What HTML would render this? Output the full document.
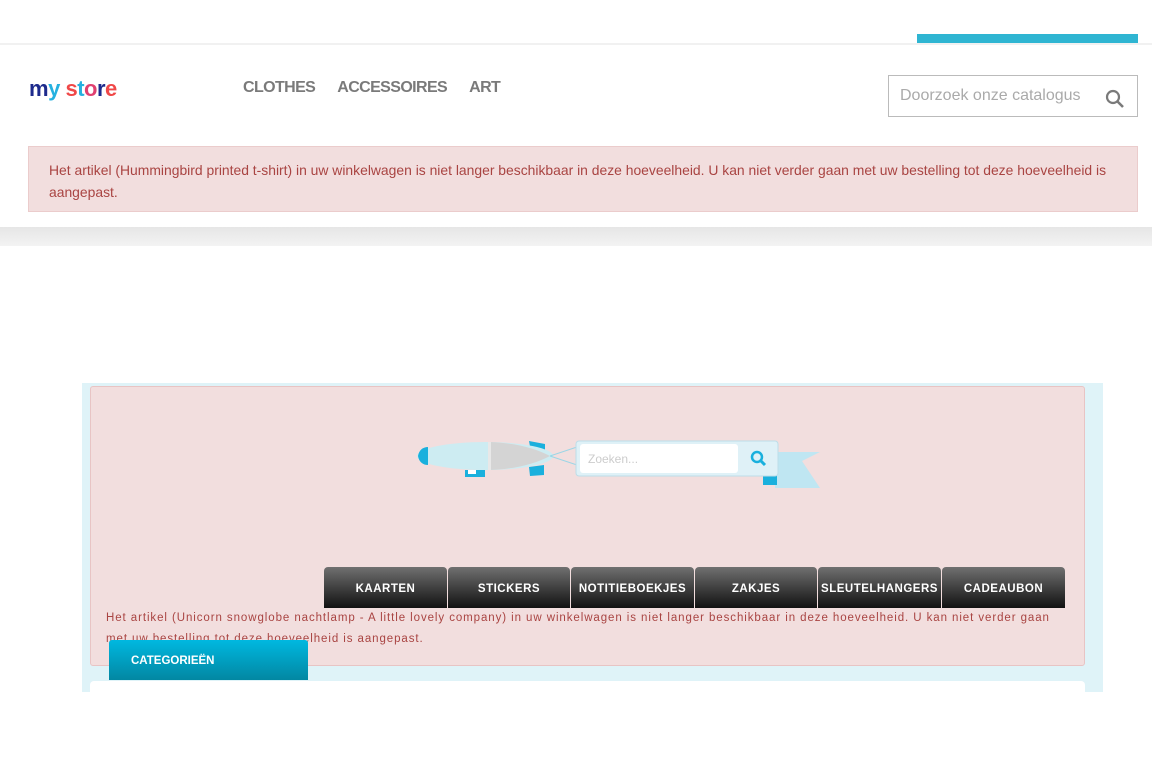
<!DOCTYPE html>
<html><head><meta charset="utf-8"><style>
*{box-sizing:border-box;margin:0;padding:0}
body{width:1152px;height:776px;background:#fff;font-family:"Liberation Sans",sans-serif;position:relative;overflow:hidden}
.abs{position:absolute}
.tab{height:41px;background:linear-gradient(#707070,#111);border-radius:4px 4px 0 0;color:#fff;font-size:11.5px;font-weight:bold;letter-spacing:.5px;display:flex;align-items:center;justify-content:center;padding-top:3px}
</style></head><body>
<div class="abs" style="left:0;top:43px;width:1152px;height:2px;background:#f1f1f1"></div>
<div class="abs" style="left:917px;top:34px;width:221px;height:9px;background:#2fb5d2"></div>
<div class="abs" style="left:29px;top:76px;font-size:22px;font-weight:bold;letter-spacing:-0.5px;line-height:26px">
<span style="color:#1d2a8c">m</span><span style="color:#25b1e0">y</span> <span style="color:#f04848">s</span><span style="color:#25b1e0">t</span><span style="color:#e04070">o</span><span style="color:#1d2a8c">r</span><span style="color:#f04848">e</span></div>
<div class="abs" style="left:243px;top:79px;font-size:16px;font-weight:bold;color:#7a7a7a;letter-spacing:-0.6px">
<span>CLOTHES</span><span style="margin-left:22px">ACCESSOIRES</span><span style="margin-left:22px">ART</span></div>
<div class="abs" style="left:888px;top:75px;width:250px;height:42px;border:1px solid #bbb;background:#fff">
<span class="abs" style="left:11px;top:11px;font-size:16px;color:#aaa">Doorzoek onze catalogus</span>
<svg class="abs" style="left:216px;top:13px" width="20" height="20" viewBox="0 0 20 20"><circle cx="8" cy="8" r="6" fill="none" stroke="#7a7a7a" stroke-width="2.2"/><line x1="12.5" y1="12.5" x2="18" y2="18" stroke="#7a7a7a" stroke-width="2.6"/></svg></div>
<div class="abs" style="left:28px;top:146px;width:1110px;height:66px;background:#f2dede;border:1px solid #ebcccc;padding:12px 20px;font-size:13.9px;line-height:22px;color:#a94442">Het artikel (Hummingbird printed t-shirt) in uw winkelwagen is niet langer beschikbaar in deze hoeveelheid. U kan niet verder gaan met uw bestelling tot deze hoeveelheid is aangepast.</div>
<div class="abs" style="left:0;top:227px;width:1152px;height:19px;background:linear-gradient(#e6e6e6,#f3f3f3)"></div>
<div class="abs" style="left:82px;top:383px;width:1021px;height:309px;background:#dff3f8"></div>
<div class="abs" style="left:90px;top:386px;width:995px;height:280px;background:#f2dede;border:1px solid #e8c4c4;border-radius:3px"></div>
<svg class="abs" style="left:415px;top:435px" width="410" height="60" viewBox="0 0 410 60">
<path d="M114 6l16 3v10l-14-2z M114 32l15-2v10l-14 1z" fill="#1ab0dd"/>
<ellipse cx="70" cy="21" rx="68" ry="14" fill="#cdecf2"/>
<path d="M75 7c25 1 45 6 60 14c-15 8-35 13-60 14z" fill="#d4d4d4"/>
<rect x="73" y="7" width="3" height="28" fill="#e8e8e8"/>
<path d="M3 21c1-6 5-9 10-9v18c-5 0-9-3-10-9z" fill="#1ab0dd"/>
<rect x="50" y="35" width="20" height="7" fill="#1ab0dd"/><rect x="53" y="35" width="8" height="4" fill="#fff"/>
<line x1="135" y1="21" x2="162" y2="12" stroke="#9cd6e6"/><line x1="135" y1="21" x2="162" y2="30" stroke="#9cd6e6"/>
<path d="M360 17h45l-18 9l18 27h-45z" fill="#bfe6f2"/>
<path d="M348 40h14v10h-14z" fill="#1ab0dd"/>
<rect x="161" y="6" width="202" height="35" rx="3" fill="#dff1f7" stroke="#bcdde8"/>
<rect x="165" y="9" width="158" height="29" rx="3" fill="#fff"/>
<circle cx="342" cy="22" r="5" fill="none" stroke="#1ab0dd" stroke-width="2.5"/><line x1="346" y1="26" x2="350" y2="30" stroke="#1ab0dd" stroke-width="3"/>
<text x="173" y="28" font-size="12" fill="#ccc" font-family="Liberation Sans">Zoeken...</text>
</svg>
<div class="abs" style="left:324px;top:567px;height:41px;display:flex;gap:1px">
<div class="tab" style="width:123px">KAARTEN</div>
<div class="tab" style="width:122px">STICKERS</div>
<div class="tab" style="width:123px">NOTITIEBOEKJES</div>
<div class="tab" style="width:122px">ZAKJES</div>
<div class="tab" style="width:123px">SLEUTELHANGERS</div>
<div class="tab" style="width:123px">CADEAUBON</div>
</div>
<div class="abs" style="left:106px;top:608px;width:965px;font-size:11.5px;line-height:21px;color:#a94442;letter-spacing:.92px">Het artikel (Unicorn snowglobe nachtlamp - A little lovely company) in uw winkelwagen is niet langer beschikbaar in deze hoeveelheid. U kan niet verder gaan met uw bestelling tot deze hoeveelheid is aangepast.</div>
<div class="abs" style="left:90px;top:681px;width:995px;height:20px;background:#fff;border-radius:4px 4px 0 0"></div>
<div class="abs" style="left:109px;top:640px;width:199px;height:40px;background:linear-gradient(#00b8e0,#0287a2);border-radius:3px 3px 0 0;color:#fff;font-size:11.5px;font-weight:bold;padding:15px 0 0 22px">CATEGORIEËN</div>
<div class="abs" style="left:82px;top:692px;width:1021px;height:84px;background:#fff"></div>
</body></html>
